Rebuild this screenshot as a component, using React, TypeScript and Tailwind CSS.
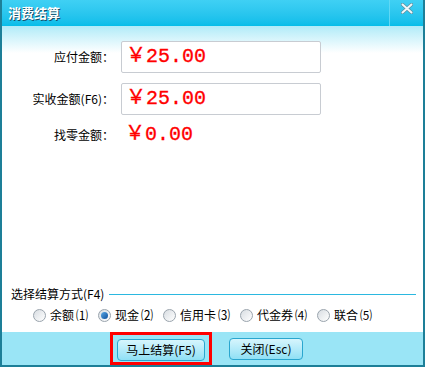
import React from "react";

const cjk = { fontFamily: '"Noto Sans CJK SC", "Noto Sans", sans-serif' };
const money = { fontFamily: '"Liberation Mono", "Noto Sans CJK SC", monospace' };

function Radio({ checked }: { checked?: boolean }) {
  return (
    <span className="relative inline-flex h-[13px] w-[13px] shrink-0 items-center justify-center rounded-full border border-[#9aa4ad] bg-gradient-to-br from-[#d8dde2] to-[#ffffff]">
      {checked && <span className="h-[7px] w-[7px] rounded-full bg-gradient-to-br from-[#5aa9e6] to-[#0b4f9c]" />}
    </span>
  );
}

export default function App() {
  const methods = [
    { label: "余额", key: "⑴", checked: false },
    { label: "现金", key: "⑵", checked: true },
    { label: "信用卡", key: "⑶", checked: false },
    { label: "代金券", key: "⑷", checked: false },
    { label: "联合", key: "⑸", checked: false },
  ];

  return (
    <div className="flex h-[367px] w-[425px] flex-col bg-[#1d7f98] px-[2px] pb-[2px]" style={cjk}>
      {/* title bar */}
      <div className="flex h-[26px] items-center bg-gradient-to-b from-[#3fd0f4] to-[#05bde9]">
        <span className="ml-[6px] text-[13px] font-bold text-white [text-shadow:1px_1px_0_#17506a]">消费结算</span>
        <div className="ml-auto flex h-full w-[34px] items-start justify-center border-l border-[#5fd8f5]">
          <svg width="12" height="11" viewBox="0 0 12 11" className="mt-[3px]">
            <path d="M1.5 1.5 L10.5 9.5 M10.5 1.5 L1.5 9.5" stroke="#5b8ea0" strokeWidth="3.4" strokeLinecap="round" />
            <path d="M1.5 1.5 L10.5 9.5 M10.5 1.5 L1.5 9.5" stroke="#eef8fb" strokeWidth="2" strokeLinecap="round" />
          </svg>
        </div>
      </div>

      {/* body */}
      <div className="flex flex-1 flex-col bg-gradient-to-b from-[#b0ebf8] via-white via-[8%] to-white">
        <div className="mt-[15px] flex items-center">
          <span className="w-[112px] text-right text-[12px] text-black">应付金额：</span>
          <div className="ml-[7px] flex h-[32px] w-[200px] items-center rounded-[2px] border border-[#c8ccd2] bg-white pl-[4px]">
            <span className="text-[20px] leading-none text-[#ff0000] [-webkit-text-stroke:0.3px_#ff0000]" style={money}>￥25.00</span>
          </div>
        </div>
        <div className="mt-[10px] flex items-center">
          <span className="w-[112px] text-right text-[12px] text-black">实收金额(F6)：</span>
          <div className="ml-[7px] flex h-[32px] w-[200px] items-center rounded-[2px] border border-[#c8ccd2] bg-white pl-[4px]">
            <span className="text-[20px] leading-none text-[#ff0000] [-webkit-text-stroke:0.3px_#ff0000]" style={money}>￥25.00</span>
          </div>
        </div>
        <div className="mt-[10px] flex items-center">
          <span className="w-[112px] text-right text-[12px] text-black">找零金额：</span>
          <span className="ml-[11px] text-[20px] leading-none text-[#ff0000] [-webkit-text-stroke:0.3px_#ff0000]" style={money}>￥0.00</span>
        </div>

        <div className="mt-auto flex items-center pl-[9px] pr-[7px]">
          <span className="text-[12px] text-black">选择结算方式(F4)</span>
          <div className="ml-[5px] h-px flex-1 bg-[#2bb8e0]" />
        </div>
        <div className="mb-[8px] mt-[3px] flex items-center pl-[31px] text-[12px] text-black">
          {methods.map((m) => (
            <span key={m.label} className="mr-[8px] flex items-center">
              <Radio checked={m.checked} />
              <span className="ml-[4px]">{m.label}</span>
              <span className="inline-block w-[16px] text-center">{m.key}</span>
            </span>
          ))}
        </div>

        {/* footer */}
        <div className="flex h-[33px] items-center bg-[#9ae5f6] pl-[108px]">
          <div className="border-[3px] border-[#ff0000] px-[4px] py-[1px]">
            <button className="h-[22px] w-[88px] rounded-[4px] border border-[#2aa6cf] bg-gradient-to-b from-[#d6f5fd] to-[#8fe0f5] text-[12px] text-black">
              马上结算(F5)
            </button>
          </div>
          <button className="ml-[17px] h-[22px] w-[74px] rounded-[4px] border border-[#2aa6cf] bg-gradient-to-b from-[#d6f5fd] to-[#8fe0f5] text-[12px] text-black">
            关闭(Esc)
          </button>
        </div>
      </div>
    </div>
  );
}
